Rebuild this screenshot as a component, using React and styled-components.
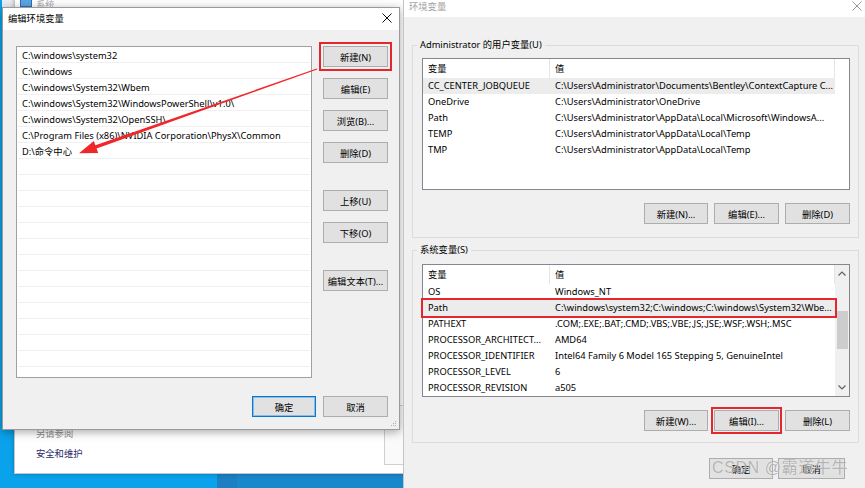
import React from 'react';
import styled, { createGlobalStyle } from 'styled-components';

const Global = createGlobalStyle`
  html, body { margin: 0; padding: 0; }
  body {
    width: 865px; height: 488px; overflow: hidden;
    font-family: "Noto Sans", "Noto Sans CJK SC", sans-serif;
    font-size: 9.3px; color: #000;
  }
  * { box-sizing: border-box; }
`;

const Desktop = styled.div`
  position: relative;
  width: 865px;
  height: 488px;
  overflow: hidden;
  background: linear-gradient(to right, #0aa2ea 0 217px, #1b7fc2 217px 237px, #1987cb 237px);
`;

/* ---------- background "系统" window ---------- */
const SysWindow = styled.div`
  position: absolute;
  left: 14px;
  top: -6px;
  width: 391px;
  height: 480px;
  background: #fff;
  border: 1px solid #c6c6c6;
  box-shadow: 0 0 4px rgba(0, 0, 0, 0.25);
  display: flex;
  flex-direction: column;
`;
const SysTitle = styled.div`
  height: 18px;
  flex: none;
  display: flex;
  align-items: center;
  gap: 4px;
  padding-left: 5px;
  color: #a8a8a8;
`;
const SysFooter = styled.div`
  flex: 1;
  display: flex;
  align-items: flex-end;
  justify-content: space-between;
`;
const SysLinks = styled.div`
  display: flex;
  flex-direction: column;
  gap: 6px;
  padding: 0 0 12px 21px;
  line-height: 14px;
`;
const SysLink = styled.div`
  color: ${(p) => (p.$muted ? '#8a8a8a' : '#1f2a66')};
`;
const SysPanelEdge = styled.div`
  width: 20px;
  height: 60px;
  margin-bottom: 8px;
  background: #fafafa;
  border: 1px solid #cfcfcf;
  border-right: none;
`;

/* ---------- generic dialog parts ---------- */
const TitleBar = styled.div`
  height: 22px;
  flex: none;
  background: #fff;
  display: flex;
  align-items: center;
  justify-content: space-between;
  padding-left: 5px;
  padding-bottom: ${(p) => (p.$inactive ? 0 : 2)}px;
  color: ${(p) => (p.$inactive ? '#a3a3a3' : '#000')};
`;
const CloseBox = styled.div`
  width: ${(p) => p.$w || 24}px;
  height: 20px;
  display: flex;
  align-items: center;
  justify-content: center;
`;
const Btn = styled.button`
  height: 21px;
  width: ${(p) => p.$w || 65}px;
  flex: none;
  padding: 0;
  margin-top: ${(p) => (p.$sep ? 16 : 0)}px;
  font: inherit;
  color: #000;
  background: #e1e1e1;
  border: 1px solid ${(p) => (p.$default ? '#0078d7' : '#adadad')};
  box-shadow: ${(p) => (p.$default ? 'inset 0 0 0 1px rgba(0,120,215,0.35)' : 'none')};
  outline: ${(p) => (p.$marked ? '2px solid #e5262c' : 'none')};
  outline-offset: ${(p) => p.$off || 1}px;
  display: flex;
  align-items: center;
  justify-content: center;
  white-space: nowrap;
`;

/* ---------- 编辑环境变量 dialog ---------- */
const EditDialog = styled.div`
  position: absolute;
  left: 2px;
  top: 7px;
  width: 398px;
  height: 423px;
  background: #f0f0f0;
  border: 1px solid #9a9a9a;
  box-shadow: 0 2px 9px rgba(0, 0, 0, 0.35);
  display: flex;
  flex-direction: column;
`;
const EditBody = styled.div`
  flex: 1;
  display: grid;
  grid-template-columns: 296px 65px;
  grid-template-rows: 332px 21px;
  column-gap: 11px;
  row-gap: 18px;
  padding: 16px 11px 0 13px;
`;
const PathList = styled.div`
  background: #fff;
  border: 1px solid #a0a0a0;
  overflow: hidden;
  display: flex;
  flex-direction: column;
`;
const PathRow = styled.div`
  height: 16px;
  flex: none;
  margin: 0 1px;
  padding: 1px 0 0 4px;
  border-bottom: 1px solid #f0f0f0;
  display: flex;
  align-items: center;
  white-space: nowrap;
`;
const BtnColumn = styled.div`
  display: flex;
  flex-direction: column;
  gap: 11px;
`;
const Footer = styled.div`
  grid-column: 1 / -1;
  display: flex;
  justify-content: flex-end;
  gap: ${(p) => p.$gap || 7}px;
  padding-right: ${(p) => p.$pr || 0}px;
  margin-top: ${(p) => p.$mt || 0}px;
`;
const Grip = styled.svg`
  position: absolute;
  right: 2px;
  bottom: 2px;
`;

/* ---------- 环境变量 dialog ---------- */
const EnvDialog = styled.div`
  position: absolute;
  left: 403px;
  top: -6px;
  width: 466px;
  height: 500px;
  background: #f0f0f0;
  border: 1px solid #c4c4c4;
  display: flex;
  flex-direction: column;
`;
const EnvBody = styled.div`
  display: flex;
  flex-direction: column;
  padding: 28px 9px 0 8px;
`;
const GroupBox = styled.div`
  position: relative;
  height: 193px;
  margin-top: ${(p) => p.$mt || 0}px;
  border: 1px solid #dcdcdc;
  padding: ${(p) => p.$pt}px 8px 0 9px;
  display: flex;
  flex-direction: column;
`;
const GroupLabel = styled.span`
  position: absolute;
  left: 4px;
  top: -8px;
  padding: 0 3px;
  line-height: 14px;
  background: #f0f0f0;
  white-space: nowrap;
`;
const ListView = styled.div`
  height: ${(p) => p.$h}px;
  flex: none;
  background: #fff;
  border: 1px solid #828790;
  display: flex;
`;
const ListMain = styled.div`
  width: 412px;
  display: flex;
  flex-direction: column;
`;
const Cols = styled.div`
  display: grid;
  grid-template-columns: 127px 285px;
  height: ${(p) => p.$h || 16}px;
  flex: none;
  background: ${(p) => (p.$sel ? '#ececec' : 'transparent')};
  outline: ${(p) => (p.$marked ? '2px solid #e5262c' : 'none')};
  outline-offset: 0;
  position: relative;
`;
const Cell = styled.div`
  padding: 0 0 2px 5px;
  display: flex;
  align-items: center;
  white-space: nowrap;
  overflow: hidden;
  border-right: ${(p) => (p.$head ? '1px solid #e5e5e5' : 'none')};
`;
const BtnRow = styled.div`
  display: flex;
  justify-content: flex-end;
  gap: 6px;
  margin-top: 13px;
`;
const Scrollbar = styled.div`
  width: 15px;
  margin-left: auto;
  background: #f0f0f0;
  display: flex;
  flex-direction: column;
`;
const ScrollArrow = styled.div`
  height: 17px;
  flex: none;
  display: flex;
  align-items: center;
  justify-content: center;
  margin-top: ${(p) => (p.$bottom ? 'auto' : '0')};
`;
const Thumb = styled.div`
  height: 38px;
  margin: 29px 1px 0 2px;
  background: #cdcdcd;
`;
const Watermark = styled.div`
  position: absolute;
  left: 712px;
  top: 458px;
  font-family: "Liberation Sans", "Noto Sans CJK SC", sans-serif;
  font-size: 16px;
  letter-spacing: 0.6px;
  line-height: 20px;
  color: rgba(120, 120, 120, 0.55);
  text-shadow: 0 0 1px rgba(255, 255, 255, 0.9);
  white-space: nowrap;
  pointer-events: none;
`;
const ArrowLayer = styled.svg`
  position: absolute;
  left: 0;
  top: 0;
  pointer-events: none;
`;
const CornerPatch = styled.div`
  position: absolute;
  left: 2px;
  top: 0;
  width: 12px;
  height: 7px;
  background: #e9eef2;
`;

const CloseIcon = ({ color }) => (
  <svg width="10" height="10" viewBox="0 0 10 10">
    <path d="M0.5 0.5 L9.5 9.5 M9.5 0.5 L0.5 9.5" stroke={color} strokeWidth="1" fill="none" />
  </svg>
);

const Chevron = ({ up }) => (
  <svg width="8" height="5" viewBox="0 0 8 5">
    <polyline
      points={up ? '0.5,4.5 4,1 7.5,4.5' : '0.5,0.5 4,4 7.5,0.5'}
      stroke="#606060"
      strokeWidth="1.2"
      fill="none"
    />
  </svg>
);

const paths = [
  'C:\\windows\\system32',
  'C:\\windows',
  'C:\\windows\\System32\\Wbem',
  'C:\\windows\\System32\\WindowsPowerShell\\v1.0\\',
  'C:\\windows\\System32\\OpenSSH\\',
  'C:\\Program Files (x86)\\NVIDIA Corporation\\PhysX\\Common',
  'D:\\命令中心',
];
const pathRows = [...paths, ...Array(14).fill('')];

const userVars = [
  ['CC_CENTER_JOBQUEUE', 'C:\\Users\\Administrator\\Documents\\Bentley\\ContextCapture C...', true],
  ['OneDrive', 'C:\\Users\\Administrator\\OneDrive'],
  ['Path', 'C:\\Users\\Administrator\\AppData\\Local\\Microsoft\\WindowsA...'],
  ['TEMP', 'C:\\Users\\Administrator\\AppData\\Local\\Temp'],
  ['TMP', 'C:\\Users\\Administrator\\AppData\\Local\\Temp'],
];
const sysVars = [
  ['OS', 'Windows_NT'],
  ['Path', 'C:\\windows\\system32;C:\\windows;C:\\windows\\System32\\Wbe...', true, true],
  ['PATHEXT', '.COM;.EXE;.BAT;.CMD;.VBS;.VBE;.JS;.JSE;.WSF;.WSH;.MSC'],
  ['PROCESSOR_ARCHITECT...', 'AMD64'],
  ['PROCESSOR_IDENTIFIER', 'Intel64 Family 6 Model 165 Stepping 5, GenuineIntel'],
  ['PROCESSOR_LEVEL', '6'],
  ['PROCESSOR_REVISION', 'a505'],
];

const Header = () => (
  <Cols $h={19}>
    <Cell $head>变量</Cell>
    <Cell $head>值</Cell>
  </Cols>
);

export default function App() {
  return (
    <Desktop>
      <Global />
      <CornerPatch />

      <SysWindow>
        <SysTitle>
          <svg width="12" height="10" viewBox="0 0 12 10">
            <rect x="0.5" y="0.5" width="11" height="7" fill="#5aa6e6" stroke="#2f6fb0" />
            <rect x="4" y="8" width="4" height="2" fill="#2f6fb0" />
          </svg>
          <span>系统</span>
        </SysTitle>
        <SysFooter>
          <SysLinks>
            <SysLink $muted>另请参阅</SysLink>
            <SysLink>安全和维护</SysLink>
          </SysLinks>
          <SysPanelEdge />
        </SysFooter>
      </SysWindow>

      <EditDialog>
        <TitleBar>
          <span>编辑环境变量</span>
          <CloseBox>
            <CloseIcon color="#111" />
          </CloseBox>
        </TitleBar>
        <EditBody>
          <PathList>
            {pathRows.map((p, i) => (
              <PathRow key={i}>{p}</PathRow>
            ))}
          </PathList>
          <BtnColumn>
            <Btn $marked $off={2}>新建(N)</Btn>
            <Btn>编辑(E)</Btn>
            <Btn>浏览(B)...</Btn>
            <Btn>删除(D)</Btn>
            <Btn $sep>上移(U)</Btn>
            <Btn>下移(O)</Btn>
            <Btn $sep>编辑文本(T)...</Btn>
          </BtnColumn>
          <Footer>
            <Btn $w={64} $default>确定</Btn>
            <Btn>取消</Btn>
          </Footer>
        </EditBody>
        <Grip width="6" height="6" viewBox="0 0 6 6">
          <rect x="4" y="0" width="1" height="1" fill="#b0b0b0" />
          <rect x="2" y="2" width="1" height="1" fill="#b0b0b0" />
          <rect x="4" y="2" width="1" height="1" fill="#b0b0b0" />
          <rect x="0" y="4" width="1" height="1" fill="#b0b0b0" />
          <rect x="2" y="4" width="1" height="1" fill="#b0b0b0" />
          <rect x="4" y="4" width="1" height="1" fill="#b0b0b0" />
        </Grip>
      </EditDialog>

      <EnvDialog>
        <TitleBar $inactive>
          <span>环境变量</span>
          <CloseBox $w={22}>
            <CloseIcon color="#9a9a9a" />
          </CloseBox>
        </TitleBar>
        <EnvBody>
          <GroupBox $pt={12}>
            <GroupLabel>Administrator 的用户变量(U)</GroupLabel>
            <ListView $h={132}>
              <ListMain>
                <Header />
                {userVars.map(([k, v, sel]) => (
                  <Cols key={k} $sel={sel}>
                    <Cell>{k}</Cell>
                    <Cell>{v}</Cell>
                  </Cols>
                ))}
              </ListMain>
            </ListView>
            <BtnRow>
              <Btn $w={64}>新建(N)...</Btn>
              <Btn>编辑(E)...</Btn>
              <Btn>删除(D)</Btn>
            </BtnRow>
          </GroupBox>

          <GroupBox $pt={13} $mt={12}>
            <GroupLabel>系统变量(S)</GroupLabel>
            <ListView $h={133}>
              <ListMain>
                <Header />
                {sysVars.map(([k, v, sel, marked]) => (
                  <Cols key={k} $sel={sel} $marked={marked}>
                    <Cell>{k}</Cell>
                    <Cell>{v}</Cell>
                  </Cols>
                ))}
              </ListMain>
              <Scrollbar>
                <ScrollArrow>
                  <Chevron up />
                </ScrollArrow>
                <Thumb />
                <ScrollArrow $bottom>
                  <Chevron />
                </ScrollArrow>
              </Scrollbar>
            </ListView>
            <BtnRow>
              <Btn $w={64}>新建(W)...</Btn>
              <Btn $marked $off={1}>编辑(I)...</Btn>
              <Btn>删除(L)</Btn>
            </BtnRow>
          </GroupBox>

          <Footer $gap={5} $pr={14} $mt={15}>
            <Btn $w={64}>确定</Btn>
            <Btn $w={67}>取消</Btn>
          </Footer>
        </EnvBody>
      </EnvDialog>

      <Watermark>CSDN @霸道牛牛</Watermark>

      <ArrowLayer width="865" height="488" viewBox="0 0 865 488">
        <polygon
          points="317.2,69.4 96.6,148.6 98.2,153 79,153.3 93.8,141 95.4,145.3 316.8,68.6"
          fill="#f0262a"
        />
      </ArrowLayer>
    </Desktop>
  );
}
